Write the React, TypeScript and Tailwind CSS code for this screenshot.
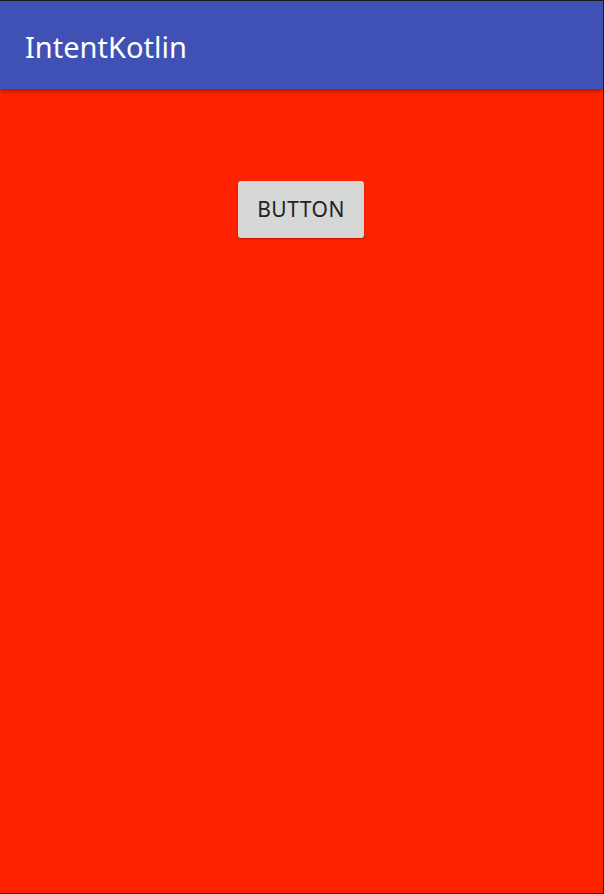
import React from 'react';

export default function App() {
  return (
    <div className="flex h-[894px] w-[604px] flex-col overflow-hidden border-t border-r border-b border-[#1a1a1a] bg-[#ff2200] font-['Noto_Sans',sans-serif]">
      <header className="relative z-10 flex h-[88px] shrink-0 items-center bg-[#3f51b5] pb-[2px] pl-[25px] shadow-[0_2px_4px_rgba(0,0,0,0.35)]">
        <h1 className="mt-[4px] text-[29px] leading-none text-white">IntentKotlin</h1>
      </header>
      <main className="flex flex-1 justify-center pt-[92px] pr-[2px]">
        <button className="h-[57px] w-[126px] rounded-[3px] bg-[#d6d7d7] pl-[1px] text-[21px] tracking-[0.5px] text-[#222222] shadow-[0_1px_2px_rgba(0,0,0,0.25)]">
          BUTTON
        </button>
      </main>
    </div>
  );
}
